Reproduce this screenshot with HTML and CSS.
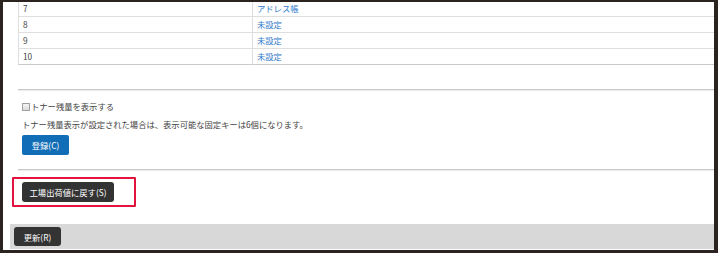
FILE: index.html
```html
<!DOCTYPE html>
<html lang="ja">
<head>
  <meta charset="UTF-8">
  <title>固定キー設定</title>
  <link rel="stylesheet" href="styles.css">
</head>
<body>

<div class="frame">
  <div class="content">

    <!-- 固定キー一覧（スクロール途中） -->
    <table class="keys">
      <tr><td>7</td><td><a href="#">アドレス帳</a></td></tr>
      <tr><td>8</td><td><a href="#">未設定</a></td></tr>
      <tr><td>9</td><td><a href="#">未設定</a></td></tr>
      <tr><td>10</td><td><a href="#">未設定</a></td></tr>
    </table>

    <div class="section">
      <hr class="sep">
      <div class="toner">
        <label class="check"><input type="checkbox">トナー残量を表示する</label>
        <p class="note">トナー残量表示が設定された場合は、表示可能な固定キーは6個になります。</p>
        <button class="btn btn-blue">登録(C)</button>
      </div>
      <hr class="sep sep-low">
    </div>

    <div class="mark">
      <button class="btn btn-dark btn-reset">工場出荷値に戻す(S)</button>
    </div>

    <div class="footer">
      <button class="btn btn-dark btn-update">更新(R)</button>
    </div>

  </div>
</div>

</body>
</html>
```

FILE: styles.css
```css
body {
  margin: 0;
  background-color: #cfcfcf;
  font-family: "Noto Sans CJK JP", "Liberation Sans", sans-serif;
  font-size: 8.3px;
  color: #444;
}
.frame {
  box-sizing: border-box;
  width: 718px;
  height: 253px;
  border-style: solid;
  border-color: #2a2320;
  border-width: 2px 4px 3px 3px;
  background-color: white;
  overflow: hidden;
}
.keys {
  margin: -1px 0 0 15px;
  width: calc(100% - 15px);
  border-collapse: separate;
  border-spacing: 0;
}
.keys td {
  height: 14px;
  padding: 0 4px 1px 4px;
  line-height: 14px;
  border-bottom: 1px solid #dedede;
  border-left: 1px solid #dedede;
}
.keys td:first-child {
  width: 225px;
}
.keys tr:last-child td {
  border-bottom-color: #cacaca;
}
.keys a {
  color: #2f7acb;
  text-decoration: none;
}
.section {
  margin-left: 15px;
}
.sep {
  margin: 24px 0 0 0;
  height: 0;
  border: none;
  border-top: 1px solid #c9c9c9;
  border-bottom: 1px solid #ececec;
}
.sep-low {
  margin-top: 14px;
}
.toner {
  padding: 9px 0 0 4px;
}
.check {
  display: flex;
  align-items: center;
  height: 13px;
  line-height: 13px;
}
.check input {
  appearance: none;
  width: 8px;
  height: 8px;
  margin: 0 1px 0 0;
  border: 1px solid #a0a0a0;
  background: linear-gradient(#f4f4f4, #dcdcdc);
  box-sizing: border-box;
}
.note {
  margin: 5px 0 0 0;
  line-height: 12px;
}
.btn {
  display: block;
  padding: 0;
  border: none;
  color: white;
  font-family: inherit;
  font-size: 8.3px;
  cursor: pointer;
}
.btn-blue {
  margin-top: 5px;
  width: 47px;
  height: 20px;
  border-radius: 2px;
  background-color: #106db6;
}
.btn-dark {
  background-color: #333333;
  border-radius: 3px;
}
.mark {
  display: inline-block;
  margin: 6px 0 0 9px;
  padding: 3px 20px 3px 8px;
  border: 2px solid #e2143e;
  border-radius: 1px;
}
.btn-reset {
  width: 92px;
  height: 20px;
}
.footer {
  margin: 17px 0 0 7px;
  padding: 3px 4px;
  background-color: #d8d8d8;
}
.btn-update {
  width: 47px;
  height: 19px;
}
```
